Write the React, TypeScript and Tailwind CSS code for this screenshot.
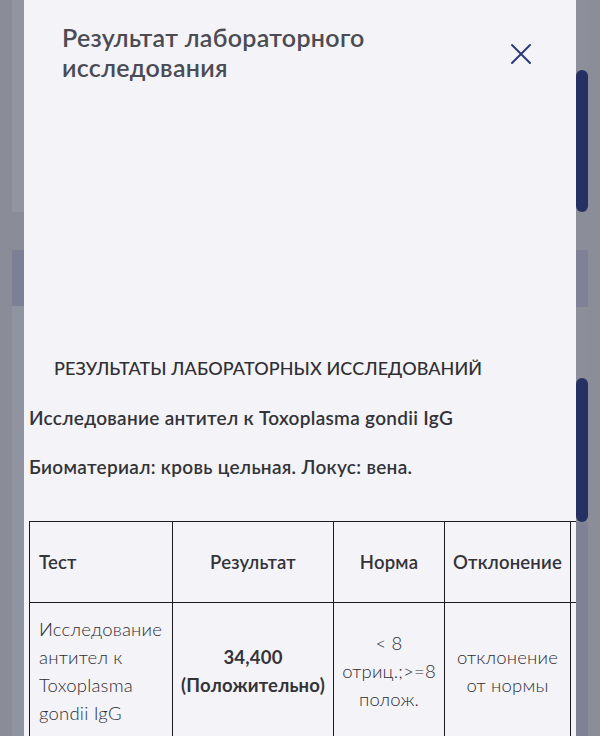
import React from 'react';

const font = { fontFamily: '"Lato", "Noto Sans", sans-serif' };

function CloseIcon() {
  return (
    <svg width="22" height="22" viewBox="0 0 22 22" fill="none">
      <path d="M2 2L20 20M20 2L2 20" stroke="#2e3a78" strokeWidth="2" strokeLinecap="round" />
    </svg>
  );
}

function LeftBackdrop() {
  return (
    <div className="w-[24px] h-full bg-[#8a8c97] flex">
      <div className="w-[12px]" />
      <div className="w-[12px] flex flex-col">
        <div className="h-[212px] bg-[#9295a0]" />
        <div className="h-[38px] bg-[#8a8c97]" />
        <div className="h-[56px] bg-[#7d7f95]" />
        <div className="flex-1 bg-[#9093a0]" />
      </div>
    </div>
  );
}

function RightBackdrop() {
  return (
    <div className="w-[24px] h-full bg-[#8b8d98] flex">
      <div className="w-[12px] flex flex-col">
        <div className="h-[70px] bg-[#8d8f9a]" />
        <div className="h-[142px] bg-[#263163] rounded-full" />
        <div className="h-[38px] bg-[#8b8d98]" />
        <div className="h-[57px] bg-[#7f8196]" />
        <div className="h-[71px] bg-[#8c8e99]" />
        <div className="h-[144px] bg-[#263163] rounded-full" />
        <div className="flex-1 bg-[#7f8195]" />
      </div>
      <div className="w-[12px]" />
    </div>
  );
}

const cell = 'border-[1.5px] border-[#1c1c1f] align-middle text-[18.5px] leading-[28px] tracking-[0.2px]';

export default function App() {
  return (
    <div className="w-[600px] h-[736px] flex overflow-hidden" style={font}>
      <LeftBackdrop />
      <div className="w-[552px] h-full bg-[#f3f3f8] overflow-hidden flex flex-col">
        <div className="flex items-start justify-between pl-[38px] pr-[44px] pt-[22px] shrink-0">
          <h1 className="text-[25px] leading-[30px] font-semibold text-[#4b4b53] tracking-[0.3px]">
            Результат лабораторного
            <br />
            исследования
          </h1>
          <button className="mt-[21px]">
            <CloseIcon />
          </button>
        </div>

        <div className="h-[274px] shrink-0" />

        <h2 className="pl-[30px] text-[18px] leading-[24px] font-medium text-[#2f2f34] uppercase tracking-[0.1px]">
          Результаты лабораторных исследований
        </h2>
        <p className="pl-[5px] mt-[26px] text-[19px] leading-[24px] font-semibold text-[#333338] tracking-[0.3px]">
          Исследование антител к Toxoplasma gondii IgG
        </p>
        <p className="pl-[5px] mt-[25px] text-[19px] leading-[24px] font-semibold text-[#333338] tracking-[0.3px]">
          Биоматериал: кровь цельная. Локус: вена.
        </p>

        <div className="pl-[5px] mt-[42px] shrink-0">
          <table className="border-collapse table-fixed w-[700px] text-[#333338]">
            <colgroup>
              <col className="w-[143px]" />
              <col className="w-[161px]" />
              <col className="w-[111px]" />
              <col className="w-[126px]" />
              <col className="w-[159px]" />
            </colgroup>
            <thead>
              <tr className="h-[81px]">
                <th className={`${cell} px-[9px] text-left font-semibold`}>Тест</th>
                <th className={`${cell} px-[4px] text-center font-semibold`}>Результат</th>
                <th className={`${cell} px-[4px] text-center font-semibold`}>Норма</th>
                <th className={`${cell} px-[2px] text-center font-semibold`}>Отклонение</th>
                <th className={cell} />
              </tr>
            </thead>
            <tbody>
              <tr>
                <td className={`${cell} pl-[9px] pr-[4px] py-[12px] text-left font-light text-[#2f2f34]`}>
                  Исследование антител к Toxoplasma gondii IgG
                </td>
                <td className={`${cell} px-[2px] text-center font-bold`}>
                  34,400 (Положительно)
                </td>
                <td className={`${cell} px-[4px] text-center font-light text-[#2f2f34]`}>
                  &lt; 8 отриц.;&gt;=8 полож.
                </td>
                <td className={`${cell} px-[4px] text-center font-light text-[#2f2f34]`}>
                  отклонение от нормы
                </td>
                <td className={cell} />
              </tr>
            </tbody>
          </table>
        </div>
      </div>
      <RightBackdrop />
    </div>
  );
}
